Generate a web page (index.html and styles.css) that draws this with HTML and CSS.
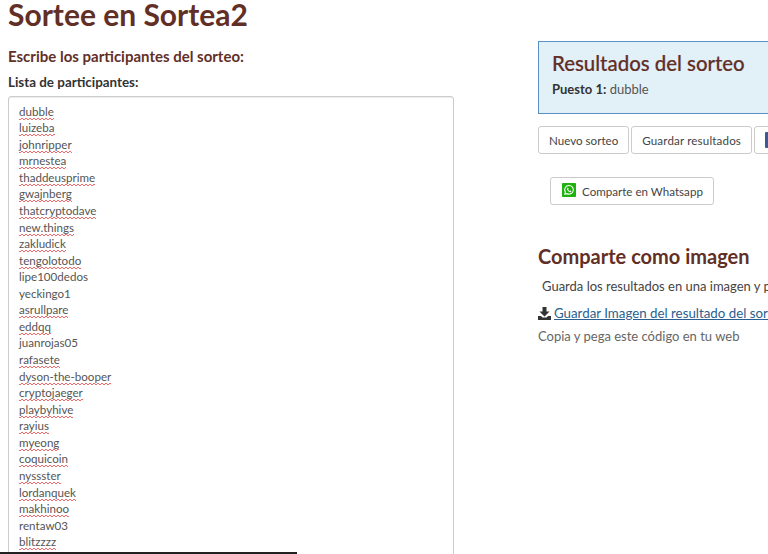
FILE: index.html
```html
<!DOCTYPE html>
<html lang="es">
<head>
<meta charset="utf-8">
<title>Sortee en Sortea2</title>
<link rel="stylesheet" href="styles.css">
</head>
<body>
<h1 class="title">Sortee en Sortea2</h1>
<div class="columns">
  <section class="left">
    <h2 class="subtitle">Escribe los participantes del sorteo:</h2>
    <div class="label">Lista de participantes:</div>
    <div class="list">
      <div class="bad">dubble</div>
      <div class="bad">luizeba</div>
      <div class="bad">johnripper</div>
      <div class="bad">mrnestea</div>
      <div class="bad">thaddeusprime</div>
      <div class="bad">gwajnberg</div>
      <div class="bad">thatcryptodave</div>
      <div class="bad">new.things</div>
      <div class="bad">zakludick</div>
      <div class="bad">tengolotodo</div>
      <div>lipe100dedos</div>
      <div>yeckingo1</div>
      <div class="bad">asrullpare</div>
      <div class="bad">eddqq</div>
      <div>juanrojas05</div>
      <div class="bad">rafasete</div>
      <div class="bad">dyson-the-booper</div>
      <div class="bad">cryptojaeger</div>
      <div class="bad">playbyhive</div>
      <div class="bad">rayius</div>
      <div class="bad">myeong</div>
      <div class="bad">coquicoin</div>
      <div class="bad">nyssster</div>
      <div class="bad">lordanquek</div>
      <div class="bad">makhinoo</div>
      <div>rentaw03</div>
      <div class="bad">blitzzzz</div>
    </div>
  </section>
  <section class="right">
    <div class="results">
      <h2 class="results-title">Resultados del sorteo</h2>
      <div class="results-line"><b>Puesto 1:</b> dubble</div>
    </div>
    <div class="actions">
      <span class="btn">Nuevo sorteo</span>
      <span class="btn btn-save">Guardar resultados</span>
      <span class="btn btn-fb"><svg class="fb" width="16" height="16" viewBox="0 0 16 16"><rect width="16" height="16" rx="1" fill="#3b5998"/></svg></span>
    </div>
    <div class="share">
      <span class="btn btn-wa"><svg class="wa" width="14" height="14" viewBox="0 0 16 16"><rect width="16" height="16" rx="1" fill="#1fb20f"/><path d="M8 2.200a5.600 5.600 0 0 0-4.800 8.500L2.400 13.600l3-.8A5.600 5.600 0 1 0 8 2.200z" fill="#fff"/><path d="M8 3.500a4.300 4.300 0 0 0-3.500 6.800l-.4 1.500 1.600-.4A4.300 4.300 0 1 0 8 3.500z" fill="#1fb20f"/><path d="M6.400 5.500c-.3 0-.8.400-.8 1.200 0 1.500 2 3.800 3.800 3.800.8 0 1.200-.6 1.200-1 0-.2-1-.8-1.200-.8s-.4.500-.6.500c-.5 0-1.700-1.200-1.700-1.700 0-.2.500-.4.500-.6s-.5-1.400-1.200-1.400z" fill="#fff"/></svg>Comparte en Whatsapp</span>
    </div>
    <h2 class="image-title">Comparte como imagen</h2>
    <p class="image-text">Guarda los resultados en una imagen y publícalos en tus redes sociales</p>
    <p class="image-link"><svg class="dl" width="13" height="13" viewBox="0 0 13 13"><path d="M4.500 0h4v4.500h3L6.500 9.500 1.500 4.500h3z" fill="#333"/><path d="M0 9h3l1.500 1.500h4L10 9h3v4H0z" fill="#333"/></svg><a href="#">Guardar Imagen del resultado del sorteo</a></p>
    <p class="image-code">Copia y pega este código en tu web</p>
  </section>
</div>
<div class="scrollbar"></div>
</body>
</html>
```
FILE: styles.css
```css
html, body {
  margin: 0;
  height: 554px;
  overflow: hidden;
  background: #fff;
}
body {
  font-family: Lato, "Open Sans", sans-serif;
  font-size: 13px;
  color: #555;
  position: relative;
  padding-left: 8px;
  box-sizing: border-box;
  width: 768px;
}
.title {
  margin: 0;
  font-size: 30px;
  line-height: 28px;
  font-weight: 700;
  color: #622f26;
}
.columns {
  display: flex;
  margin-top: 13px;
  gap: 84px;
}
.left {
  width: 446px;
  flex: none;
}
.subtitle {
  margin: 0;
  padding-top: 5px;
  font-size: 15px;
  line-height: 20px;
  font-weight: 700;
  color: #622f26;
}
.label {
  margin-top: 7px;
  font-size: 13.400px;
  line-height: 18px;
  font-weight: 700;
  color: #333;
}
.list {
  margin-top: 5px;
  height: 460px;
  box-sizing: border-box;
  border: 1px solid #ccc;
  border-radius: 3px;
  padding: 6.600px 10px;
  font-size: 11.600px;
  line-height: 16.570px;
  box-shadow: inset 0 1px 1px rgba(0,0,0,.08);
}
.bad {
  width: fit-content;
  background-image:
    linear-gradient(135deg, transparent 35%, #f26a6a 35%, #f26a6a 65%, transparent 65%),
    linear-gradient(45deg, transparent 35%, #f26a6a 35%, #f26a6a 65%, transparent 65%);
  background-size: 4px 2px;
  background-position: 0 14px, 2px 14px;
  background-repeat: repeat-x;
}
.right {
  width: 320px;
  flex: none;
}
.results {
  width: 300px;
  box-sizing: border-box;
  height: 73px;
  padding: 8px 13px;
  background: #e2f1f8;
  border: 1px solid #5b8fc7;
}
.results-title {
  margin: 0;
  font-size: 20.400px;
  line-height: 27px;
  font-weight: 500;
  color: #622f26;
  -webkit-text-stroke: 0.200px #622f26;
}
.results-line {
  margin-top: 3px;
  font-size: 13px;
  line-height: 18px;
}
.results-line b { color: #333; }
.actions {
  display: flex;
  gap: 2px;
  margin-top: 12px;
  white-space: nowrap;
}
.btn {
  display: inline-flex;
  align-items: center;
  height: 28px;
  padding: 0 10px;
  box-sizing: border-box;
  border: 1px solid #ccc;
  border-radius: 3px;
  background: #fff;
  font-size: 11.600px;
  color: #444;
}
.btn-save { letter-spacing: 0.150px; }
.btn-wa { padding-left: 11px; }
.share {
  margin-top: 23px;
  padding-left: 12px;
}
.wa { margin-right: 6px; margin-top: -2px; }
.image-title {
  margin: 38px 0 0;
  font-size: 20px;
  line-height: 26px;
  font-weight: 700;
  color: #622f26;
  white-space: nowrap;
}
.image-text {
  margin: 8px 0 0 4px;
  font-size: 13px;
  line-height: 18px;
  color: #444;
  white-space: nowrap;
}
.image-link {
  margin: 9px 0 0;
  font-size: 13.300px;
  line-height: 18px;
  white-space: nowrap;
  display: flex;
  align-items: center;
}
.dl { margin-right: 3px; }
.image-link a { color: #2a5f8f; text-decoration: underline; }
.image-code {
  margin: 5px 0 0;
  font-size: 13px;
  line-height: 18px;
  color: #666;
}
.scrollbar {
  position: absolute;
  left: 0;
  bottom: 0;
  width: 297px;
  height: 2px;
  background: #222;
}
```
